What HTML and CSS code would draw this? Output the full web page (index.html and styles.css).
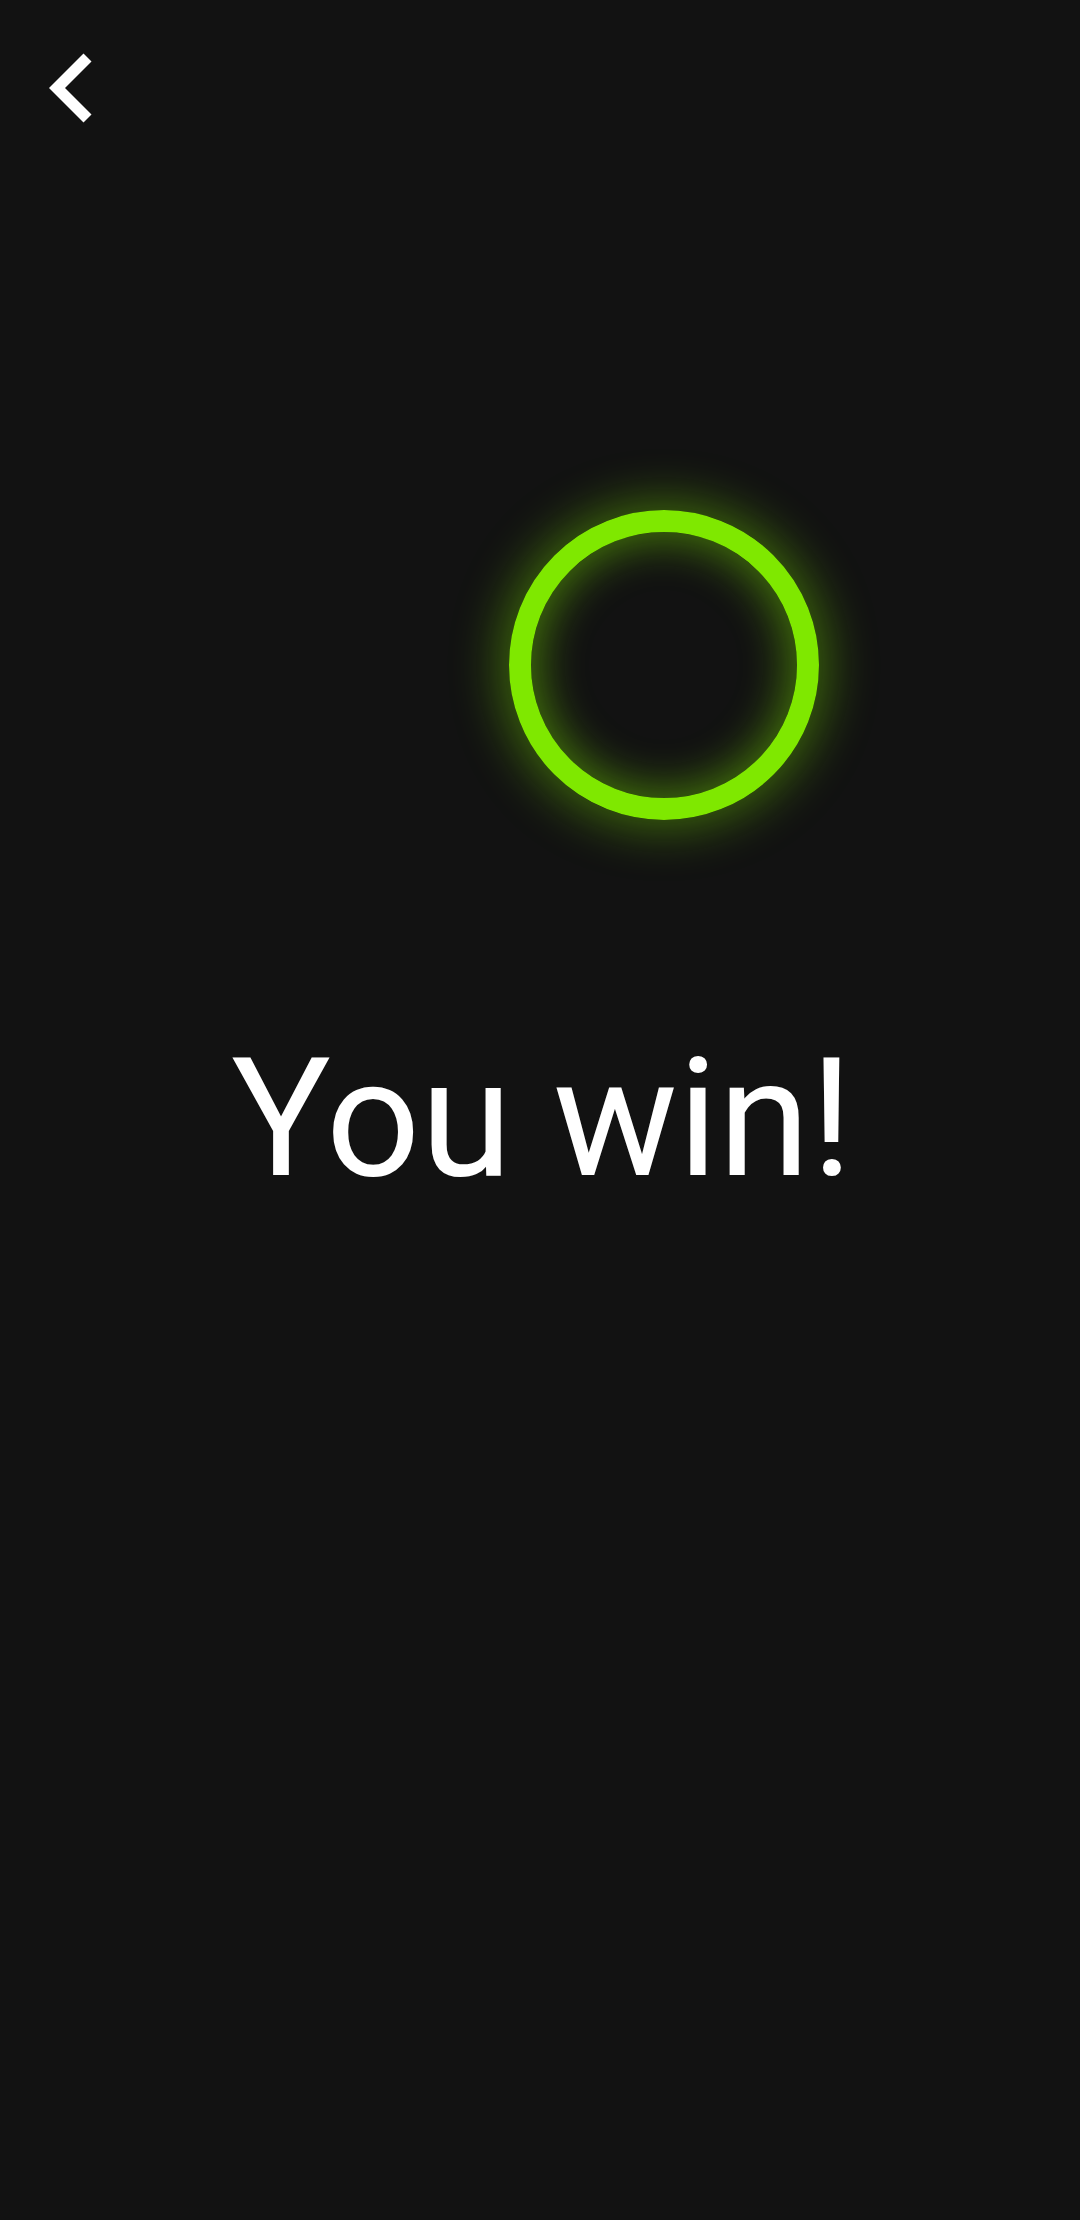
FILE: index.html
```html
<!DOCTYPE html>
<html>
<head>
<meta charset="utf-8">
<link rel="stylesheet" href="styles.css">
</head>
<body>
<div class="screen">
  <header class="topbar">
    <button class="back" aria-label="Back">
      <svg viewBox="0 0 82 82" width="82" height="82"><path fill="#ffffff" d="M20 41 L54.5 6.5 L62.5 14.5 L36 41 L62.5 67.5 L54.5 75.5 Z"/></svg>
    </button>
  </header>
  <div class="stage">
    <div class="ring"></div>
  </div>
  <h1 class="result">You win!</h1>
</div>
</body>
</html>
```
FILE: styles.css
```css
html, body {
  margin: 0;
  padding: 0;
  background: #121212;
}
.screen {
  width: 1080px;
  height: 2220px;
  display: flex;
  flex-direction: column;
  background: #121212;
  font-family: Roboto, "Noto Sans", sans-serif;
  overflow: hidden;
}
.topbar {
  height: 176px;
  padding: 47px 0 0 29px;
  box-sizing: border-box;
}
.back {
  display: block;
  width: 82px;
  height: 82px;
  padding: 0;
  margin: 0;
  border: 0;
  background: none;
}
.back svg { display: block; }
.stage {
  position: relative;
  height: 845px;
}
.ring {
  position: absolute;
  left: 509px;
  top: 334px;
  width: 310px;
  height: 310px;
  box-sizing: border-box;
  border-radius: 50%;
  border: 22px solid #7fe800;
  box-shadow: 0 0 50px 8px rgba(127, 232, 0, 0.42), inset 0 0 44px 8px rgba(127, 232, 0, 0.45);
}
.result {
  margin: 0;
  padding-left: 4px;
  text-align: center;
  color: #ffffff;
  font-weight: 400;
  font-size: 166px;
  line-height: normal;
}
```
